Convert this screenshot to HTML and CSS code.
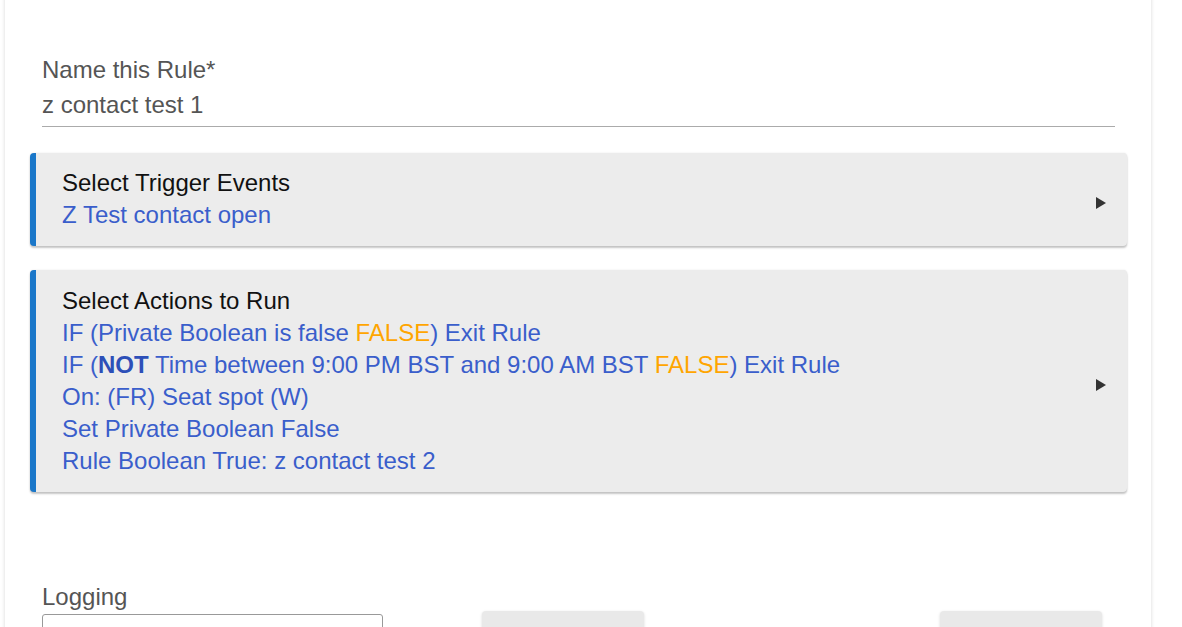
FILE: index.html
```html
<!DOCTYPE html>
<html>
<head>
	<meta charset="utf-8">
	<title>Rule</title>
	<link rel="stylesheet" href="styles.css">
</head>
<body>
	<div class="panel">
		<div class="field">
			<label class="field-label">Name this Rule*</label>
			<div class="field-input">z contact test 1</div>
		</div>

		<div class="section">
			<div class="section-body">
				<div class="section-title">Select Trigger Events</div>
				<div class="line">Z Test contact open</div>
			</div>
			<span class="arrow"></span>
		</div>

		<div class="section">
			<div class="section-body">
				<div class="section-title">Select Actions to Run</div>
				<div class="line">IF (Private Boolean is false <span class="warn">FALSE</span>) Exit Rule</div>
				<div class="line">IF (<b>NOT</b> Time between 9:00 PM BST and 9:00 AM BST <span class="warn">FALSE</span>) Exit Rule</div>
				<div class="line">On: (FR) Seat spot (W)</div>
				<div class="line">Set Private Boolean False</div>
				<div class="line">Rule Boolean True: z contact test 2</div>
			</div>
			<span class="arrow"></span>
		</div>

		<div class="bottom-row">
			<div class="col-logging">
				<label class="field-label">Logging</label>
				<div class="select-box"></div>
			</div>
			<div class="btn btn-1"></div>
			<div class="btn btn-2"></div>
		</div>
	</div>
</body>
</html>
```

FILE: styles.css
```css
html, body {
	height: 100%;
	overflow: hidden;
}

body {
	margin: 0;
	padding: 0;
	background: #fff;
	font-family: "Liberation Sans", Arial, sans-serif;
	font-size: 24px;
	line-height: 32px;
}

.panel {
	margin: -10px 0 0 5px;
	width: 1146px;
	height: 700px;
	box-sizing: border-box;
	padding: 10px 24px 0 25px;
	background: #fff;
	box-shadow: 0 0 4px rgba(0, 0, 0, 0.16);
}

.field {
	margin: 0 12px;
	padding-top: 54px;
}

.field-label {
	display: block;
	color: #555;
}

.field-input {
	margin-top: 3px;
	padding-bottom: 5px;
	color: #555;
	border-bottom: 1px solid #ababab;
}

.section {
	display: flex;
	align-items: center;
	margin-top: 26px;
	padding: 14px 21px 15px 26px;
	background: #ececec;
	border-left: 6px solid #1a77c9;
	border-radius: 4px;
	box-shadow: 0 2px 2px rgba(0, 0, 0, 0.22), 0 0 2px rgba(0, 0, 0, 0.1);
}

.section + .section {
	margin-top: 24px;
	padding-top: 15px;
}

.section-body {
	flex: 1;
}

.section-title {
	color: #111;
}

.line {
	color: #3a5ecb;
}

.line b {
	color: #2d4fb8;
}

.warn {
	color: #ffa500;
}

.arrow {
	width: 0;
	height: 0;
	margin-top: 7px;
	border-top: 6px solid transparent;
	border-bottom: 6px solid transparent;
	border-left: 10px solid #333;
}

.bottom-row {
	display: flex;
	align-items: flex-start;
	margin: 89px 0 0 12px;
}

.col-logging {
	width: 341px;
}

.select-box {
	height: 40px;
	margin-top: 1px;
	border: 1px solid #999;
	border-radius: 3px;
	box-sizing: border-box;
}

.btn {
	width: 162px;
	height: 44px;
	margin-top: 30px;
	background: #e9e9e9;
	border-radius: 4px;
	box-shadow: 0 1px 3px rgba(0, 0, 0, 0.15);
}

.btn-1 {
	margin-left: 99px;
}

.btn-2 {
	margin-left: 296px;
}
```
